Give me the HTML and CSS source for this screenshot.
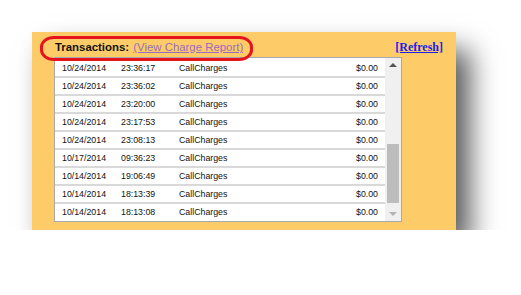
FILE: index.html
```html
<!DOCTYPE html>
<html>
<head>
  <meta charset="UTF-8">
  <title>Transactions</title>
  <link rel="stylesheet" href="styles.css">
</head>
<body>
  <div class="panel">
    <div class="panel-head">
      <div class="title">
        <b>Transactions:</b>
        <a href="#" class="report-link">(View Charge Report)</a>
      </div>
      <a href="#" class="refresh">[Refresh]</a>
    </div>
    <!-- red annotation ring round the title -->
    <div class="marker"></div>

    <div class="grid">
      <div class="rows">
        <div class="row"><span>10/24/2014</span><span>23:36:17</span><span>CallCharges</span><span class="amt">$0.00</span></div>
        <div class="row"><span>10/24/2014</span><span>23:36:02</span><span>CallCharges</span><span class="amt">$0.00</span></div>
        <div class="row"><span>10/24/2014</span><span>23:20:00</span><span>CallCharges</span><span class="amt">$0.00</span></div>
        <div class="row"><span>10/24/2014</span><span>23:17:53</span><span>CallCharges</span><span class="amt">$0.00</span></div>
        <div class="row"><span>10/24/2014</span><span>23:08:13</span><span>CallCharges</span><span class="amt">$0.00</span></div>
        <div class="row"><span>10/17/2014</span><span>09:36:23</span><span>CallCharges</span><span class="amt">$0.00</span></div>
        <div class="row"><span>10/14/2014</span><span>19:06:49</span><span>CallCharges</span><span class="amt">$0.00</span></div>
        <div class="row"><span>10/14/2014</span><span>18:13:39</span><span>CallCharges</span><span class="amt">$0.00</span></div>
        <div class="row"><span>10/14/2014</span><span>18:13:08</span><span>CallCharges</span><span class="amt">$0.00</span></div>
      </div>
      <div class="scrollbar">
        <div class="arrow up"></div>
        <div class="track"><div class="thumb"></div></div>
        <div class="arrow down"></div>
      </div>
    </div>
  </div>
</body>
</html>
```

FILE: styles.css
```css
/* Global Styles */
body {
  margin: 0;
  padding: 0;
  background-color: #fff;
  font-family: "Liberation Sans", Arial, sans-serif;
  color: #1a1a1a;
}
/* Panel */
.panel {
  position: relative;
  margin: 32px 0 0 32px;
  width: 424px;
  height: 198px;
  box-sizing: border-box;
  padding: 8px 13px 0 22px;
  background-color: #fdcb67;
  box-shadow: 14px 18px 26px rgba(0,0,0,0.65);
}
.panel-head {
  display: flex;
  justify-content: space-between;
  align-items: center;
  height: 14px;
  margin-bottom: 3px;
}
.title {
  padding-left: 1px;
  font-size: 11.4px;
  line-height: 14px;
  color: #111;
}
.report-link {
  color: #9a6cc0;
  margin-left: 1px;
}
.refresh {
  font-family: "Liberation Serif", "Times New Roman", serif;
  font-weight: bold;
  font-size: 12px;
  line-height: 14px;
  color: #1d1df0;
}
.marker {
  position: absolute;
  left: 8px;
  top: 4px;
  width: 207px;
  height: 19px;
  border: 3.5px solid #e5141c;
  border-radius: 14px / 11px;
}
/* Transaction grid */
.grid {
  display: flex;
  width: 348px;
  height: 165px;
  box-sizing: border-box;
  border: 1px solid #a9a9a9;
  background: #fff;
}
.rows {
  flex: 1;
  padding-top: 2px;
}
.row {
  display: grid;
  grid-template-columns: 59px 58px 1fr auto;
  height: 16px;
  padding: 0 7px;
  border-bottom: 2px solid #d9d9d9;
  font-size: 8.8px;
  line-height: 16px;
  color: #111;
}
.row:last-child {
  border-bottom: none;
}
.amt {
  text-align: right;
}
.scrollbar {
  display: flex;
  flex-direction: column;
  width: 16px;
  background: #f0f0f0;
}
.arrow {
  height: 14px;
  position: relative;
}
.arrow::after {
  content: "";
  position: absolute;
  left: 4px;
  top: 5px;
  border-left: 4px solid transparent;
  border-right: 4px solid transparent;
}
.arrow.up::after {
  border-bottom: 4px solid #555;
}
.arrow.down::after {
  border-top: 4px solid #b4b4b4;
}
.track {
  flex: 1;
  padding: 72px 2px 0 2px;
}
.thumb {
  height: 59px;
  background: #bdbdbd;
}
```
